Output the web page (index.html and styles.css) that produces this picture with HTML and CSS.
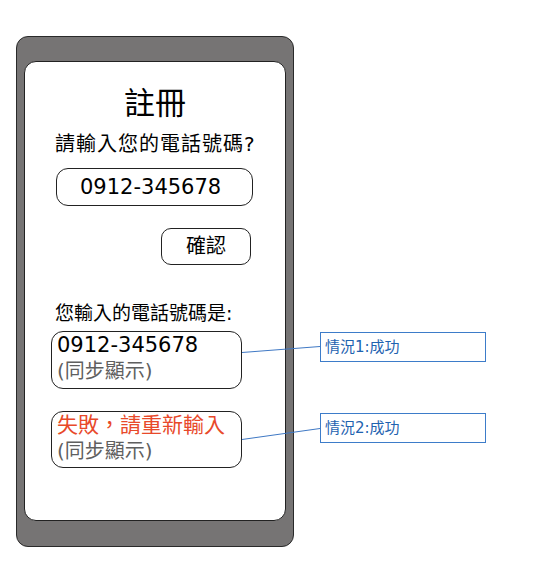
FILE: index.html
```html
<!DOCTYPE html>
<html lang="zh-Hant">
<head>
<meta charset="utf-8">
<title>註冊</title>
<link rel="stylesheet" href="styles.css">
</head>
<body>
<div class="canvas">
  <div class="phone">
    <div class="screen">
      <h1 class="title">註冊</h1>
      <p class="question">請輸入您的電話號碼?</p>
      <div class="input">0912-345678</div>
      <div class="btn">確認</div>
      <p class="result-label">您輸入的電話號碼是:</p>
      <div class="result">
        <div class="line-main">0912-345678</div>
        <div class="line-sub">(同步顯示)</div>
      </div>
      <div class="result result-fail">
        <div class="line-main fail">失敗，請重新輸入</div>
        <div class="line-sub">(同步顯示)</div>
      </div>
    </div>
  </div>
  <svg class="connectors" width="555" height="571" viewBox="0 0 555 571">
    <line x1="242" y1="352.5" x2="320" y2="346.5"/>
    <line x1="242" y1="439.5" x2="320" y2="428.5"/>
  </svg>
  <div class="note note-1">情況1:成功</div>
  <div class="note note-2">情況2:成功</div>
</div>
</body>
</html>
```

FILE: styles.css
```css
html, body {
  margin: 0;
  padding: 0;
  background: #ffffff;
}

body {
  font-family: "DejaVu Sans", "Noto Sans CJK TC", sans-serif;
  color: #000;
}

.canvas {
  position: relative;
  width: 555px;
  height: 571px;
  padding: 36px 0 0 16px;
  box-sizing: border-box;
}

.phone {
  width: 278px;
  height: 511px;
  box-sizing: border-box;
  background: #767474;
  border: 1px solid #2a2a2a;
  border-radius: 12px;
  padding: 24px 7px 25px 7px;
}

.screen {
  height: 100%;
  box-sizing: border-box;
  background: #fff;
  border: 1px solid #222;
  border-radius: 12px;
  display: flex;
  flex-direction: column;
  align-items: flex-start;
}

.title {
  margin: 23px 0 0 0;
  align-self: center;
  font-size: 31px;
  line-height: 36px;
  font-weight: normal;
}

.question {
  margin: 11px 0 0 30px;
  font-size: 20px;
  line-height: 24px;
  letter-spacing: 1px;
}

.input {
  margin: 12px 0 0 31px;
  width: 197px;
  height: 38px;
  box-sizing: border-box;
  border: 1px solid #222;
  border-radius: 12px;
  padding-left: 23px;
  font-size: 21px;
  line-height: 36px;
}

.btn {
  margin: 22px 0 0 136px;
  width: 90px;
  height: 37px;
  box-sizing: border-box;
  border: 1px solid #222;
  border-radius: 10px;
  font-size: 20px;
  line-height: 35px;
  text-align: center;
}

.result-label {
  margin: 37px 0 0 30px;
  font-size: 19px;
  line-height: 22px;
}

.result {
  margin: 7px 0 0 26px;
  width: 191px;
  height: 58px;
  box-sizing: border-box;
  border: 1px solid #222;
  border-radius: 12px;
  padding: 0 0 0 5px;
}

.result-fail {
  margin-top: 22px;
  height: 57px;
}

.line-main {
  font-size: 21px;
  line-height: 27px;
}

.line-main.fail {
  color: #e8492a;
  font-size: 21px;
}

.line-sub {
  font-size: 20px;
  line-height: 25px;
  color: #5f5f5f;
}

.connectors {
  position: absolute;
  left: 0;
  top: 0;
  pointer-events: none;
}

.connectors line {
  stroke: #3f78c4;
  stroke-width: 1;
}

.note {
  position: absolute;
  left: 320px;
  width: 166px;
  height: 30px;
  box-sizing: border-box;
  border: 1px solid #3d7cc9;
  padding-left: 4px;
  font-size: 15px;
  line-height: 28px;
  color: #1f63b0;
  background: #fff;
}

.note-1 { top: 332px; }
.note-2 { top: 413px; }
```
